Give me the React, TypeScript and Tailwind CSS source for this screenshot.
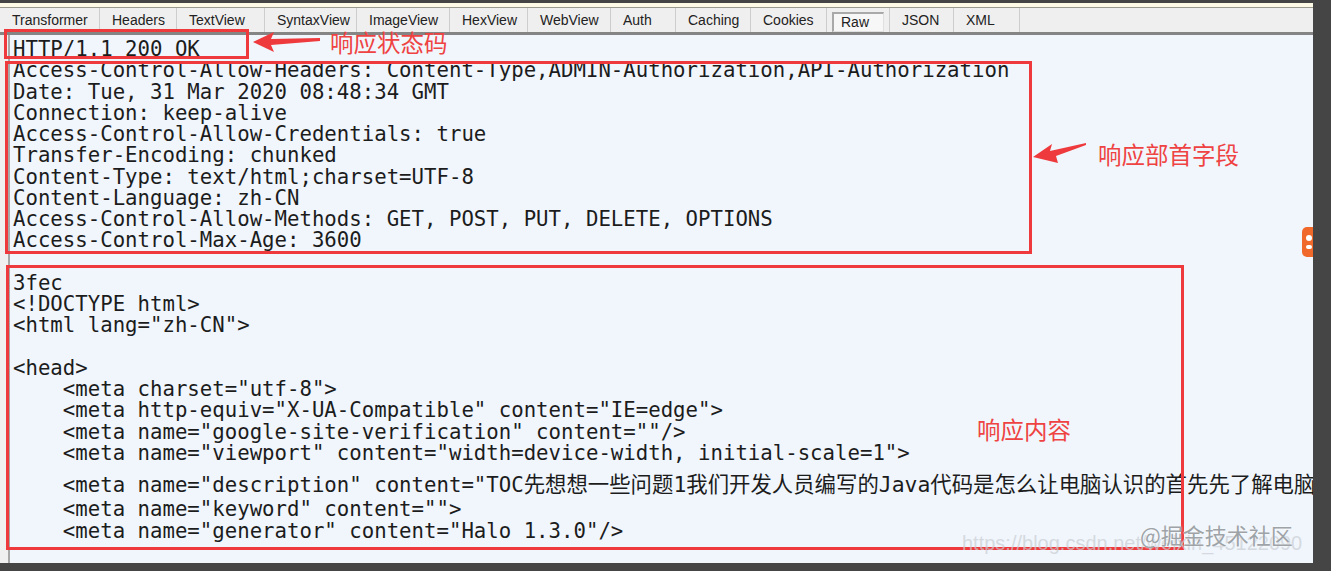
import React from 'react';

const tabs: { label: string; w: string; active?: boolean }[] = [
  { label: 'Transformer', w: 'w-[100px]' },
  { label: 'Headers', w: 'w-[77px]' },
  { label: 'TextView', w: 'w-[88px]' },
  { label: 'SyntaxView', w: 'w-[92px]' },
  { label: 'ImageView', w: 'w-[93px]' },
  { label: 'HexView', w: 'w-[78px]' },
  { label: 'WebView', w: 'w-[83px]' },
  { label: 'Auth', w: 'w-[65px]' },
  { label: 'Caching', w: 'w-[75px]' },
  { label: 'Cookies', w: 'w-[76px]' },
  { label: 'Raw', w: 'w-[63px]', active: true },
  { label: 'JSON', w: 'w-[64px]' },
  { label: 'XML', w: 'w-[66px]' },
];

const headLines = [
  'HTTP/1.1 200 OK',
  'Access-Control-Allow-Headers: Content-Type,ADMIN-Authorization,API-Authorization',
  'Date: Tue, 31 Mar 2020 08:48:34 GMT',
  'Connection: keep-alive',
  'Access-Control-Allow-Credentials: true',
  'Transfer-Encoding: chunked',
  'Content-Type: text/html;charset=UTF-8',
  'Content-Language: zh-CN',
  'Access-Control-Allow-Methods: GET, POST, PUT, DELETE, OPTIONS',
  'Access-Control-Max-Age: 3600',
  ' ',
  '3fec',
  '<!DOCTYPE html>',
  '<html lang="zh-CN">',
  ' ',
  '<head>',
  '    <meta charset="utf-8">',
  '    <meta http-equiv="X-UA-Compatible" content="IE=edge">',
  '    <meta name="google-site-verification" content=""/>',
  '    <meta name="viewport" content="width=device-width, initial-scale=1">',
];

const tailLines = [
  '    <meta name="keyword" content="">',
  '    <meta name="generator" content="Halo 1.3.0"/>',
];

const Note: React.FC<{ text: string; className: string }> = ({ text, className }) => (
  <div
    className={`absolute text-[23.5px] leading-none text-[#ef4343] whitespace-nowrap ${className}`}
    style={{ fontFamily: '"Noto Sans CJK SC", "Noto Sans", sans-serif' }}
  >
    {text}
  </div>
);

export default function App() {
  return (
    <div className="w-[1331px] h-[571px] bg-[#454545] overflow-hidden flex flex-col">
      {/* cropped window strip at the very top */}
      <div className="h-[3px] w-[1313px]" />
      <div className="h-[5px] w-[1313px] bg-[#fdfbe6] border-b border-[#9a9a90]" />

      <div className="flex-1 flex">
        <div className="w-[1313px] h-[555px] flex flex-col bg-[#f0efef] relative overflow-hidden">
          {/* tab strip */}
          <div
            className="h-[27px] flex items-stretch text-[14px] text-[#222] border-b-[3px] border-[#858585]"
            style={{ fontFamily: '"Liberation Sans", Arial, sans-serif' }}
          >
            {tabs.map((t) => (
              <div key={t.label} className={`${t.w} shrink-0 flex items-center border-r border-[#cdcdcd] pl-[5px] pt-[1px]`}>
                {t.active ? (
                  <div className="w-[52px] h-[20px] mt-[2px] flex items-center pl-[7px] bg-[#f7f7f7] border-t-2 border-l-2 border-[#a9a9a9] border-r border-b border-r-[#e0e0e0] border-b-[#e0e0e0]">
                    {t.label}
                  </div>
                ) : (
                  <span className="pl-[7px]">{t.label}</span>
                )}
              </div>
            ))}
          </div>

          {/* raw response text */}
          <div className="flex-1 flex">
            <div className="w-[8px] bg-[#f0f0f0]" />
            <div
              className="flex-1 bg-[#f0f6fc] border-l-2 border-[#a8a8a8] pl-[3px] pt-[4px] text-[20.7px] leading-[21.25px] text-[#1c1c1c] whitespace-pre overflow-hidden"
              style={{ fontFamily: '"DejaVu Sans Mono", "Liberation Mono", "Noto Sans CJK SC", monospace' }}
            >
              {headLines.map((l, i) => (
                <div key={i}>{l}</div>
              ))}
              <div className="mt-[10px] mb-[3px]">
                {'    <meta name="description" content="TOC'}
                <span className="text-[21.4px]">先想想一些问题1我们开发人员编写的Java代码是怎么让电脑认识的首先先了解电脑是怎么工作的</span>
              </div>
              {tailLines.map((l, i) => (
                <div key={i}>{l}</div>
              ))}
            </div>
          </div>

          {/* annotation boxes */}
          <div className="absolute left-[4px] top-[21px] w-[245px] h-[30px] border-[3px] border-[#ee3a3d]" />
          <div className="absolute left-[5px] top-[53px] w-[1027px] h-[193px] border-[3px] border-[#ee3a3d]" />
          <div className="absolute left-[6px] top-[257px] w-[1178px] h-[285px] border-[3px] border-[#ee3a3d]" />

          {/* annotation arrows */}
          <svg className="absolute left-[250px] top-[22px]" width="72" height="24" viewBox="0 0 72 24">
            <polygon points="3,12 24,2 21,9 70,8 70,11 21,15 24,22" fill="#ee3a3d" />
          </svg>
          <svg className="absolute left-[1030px] top-[131px]" width="60" height="28" viewBox="0 0 60 28">
            <polygon points="3,18 22,5 20,12 56,4 56,6 26,17 28,24" fill="#ee3a3d" />
          </svg>

          <Note text="响应状态码" className="left-[330px] top-[23px]" />
          <Note text="响应部首字段" className="left-[1098px] top-[135px]" />
          <Note text="响应内容" className="left-[977px] top-[410px]" />

          {/* watermarks */}
          <div
            className="absolute left-[962px] top-[525px] text-[20px] leading-none text-[#c9cdd2]/70 whitespace-nowrap"
            style={{ fontFamily: '"Liberation Sans", Arial, sans-serif' }}
          >
            https://blog.csdn.net/weixin_45122090
          </div>
          <div
            className="absolute left-[1140px] top-[515px] text-[22px] leading-none text-[#9ea3a8] whitespace-nowrap [text-shadow:0_0_2px_#ffffff]"
            style={{ fontFamily: '"Noto Sans CJK SC", "Noto Sans", sans-serif' }}
          >
            @掘金技术社区
          </div>

          {/* floating orange button peeking in from the right */}
          <div className="absolute left-[1302px] top-[219px] w-[22px] h-[30px] rounded-[5px] bg-[#f0692a] flex flex-col items-start justify-center gap-[4px] pl-[4px]">
            <div className="w-[6px] h-[6px] rounded-full bg-white" />
            <div className="w-[6px] h-[4px] rounded-sm bg-white" />
          </div>
        </div>
        <div className="flex-1" />
      </div>
    </div>
  );
}
